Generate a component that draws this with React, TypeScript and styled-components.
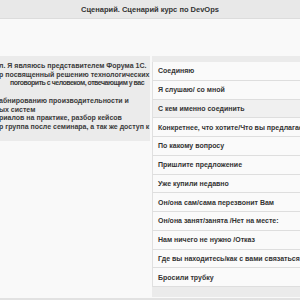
import React from "react";
import styled, { createGlobalStyle } from "styled-components";

const GlobalStyle = createGlobalStyle`
  html, body {
    margin: 0;
    padding: 0;
    width: 300px;
    height: 300px;
    overflow: hidden;
    background: #f9f9f9;
    font-family: "Liberation Sans", Arial, sans-serif;
    color: #333;
  }
`;

const Page = styled.div`
  width: 300px;
  height: 300px;
  overflow: hidden;
  display: flex;
  flex-direction: column;
  border-bottom: 2px solid #e2e2e2;
  box-sizing: border-box;
`;

const Header = styled.div`
  height: 18px;
  flex: none;
  display: flex;
  align-items: center;
  justify-content: center;
  background: #e8e8e8;
  border-bottom: 1px solid #dcdcdc;
  font-size: 7.5px;
  font-weight: bold;
  color: #333;
`;

const Spacer = styled.div`
  height: 37px;
  flex: none;
`;

const Columns = styled.div`
  display: flex;
  align-items: flex-start;
  gap: 2px;
  width: 360px;
`;

const Script = styled.div`
  width: 150px;
  flex: none;
  background: #ebebeb;
  padding: 6px 0 9px 0;
  overflow: hidden;
  font-size: 7px;
  font-weight: bold;
  line-height: 8.7px;
  color: #3a3a3a;
`;

const Line = styled.div<{ $indent?: number; $tight?: boolean }>`
  white-space: nowrap;
  margin-left: ${(p) => p.$indent ?? -1}px;
  letter-spacing: ${(p) => (p.$tight ? "-0.5px" : "normal")};
  min-height: 8.7px;
`;

const Answers = styled.div`
  flex: 1;
  background: #ebebeb;
  padding: 6px 0 10px 0;
`;

const Answer = styled.div<{ $active?: boolean }>`
  height: 18.75px;
  box-sizing: border-box;
  display: flex;
  align-items: center;
  padding-left: 5px;
  background: ${(p) => (p.$active ? "#f0f0f0" : "#fafafa")};
  border-bottom: 1px solid #dedede;
  border-left: 1px solid #e0e0e0;
  font-size: 7px;
  font-weight: bold;
  color: #333;
  white-space: nowrap;
`;

const answers = [
  "Соединяю",
  "Я слушаю/ со мной",
  "С кем именно соединить",
  "Конкретнее, что хотите/Что вы предлагаете",
  "По какому вопросу",
  "Пришлите предложение",
  "Уже купили недавно",
  "Он/она сам/сама перезвонит Вам",
  "Он/она занят/занята /Нет на месте:",
  "Нам ничего не нужно /Отказ",
  "Где вы находитесь/как с вами связаться",
  "Бросили трубку",
];

export default function App() {
  return (
    <>
      <GlobalStyle />
      <Page>
        <Header>Сценарий. Сценарий курс по DevOps</Header>
        <Spacer />
        <Columns>
          <Script>
            <Line>л. Я являюсь представителем Форума 1С.</Line>
            <Line>р посвященный решению технологических</Line>
            <Line $indent={10} $tight>
              поговорить с человеком, отвечающим у вас
            </Line>
            <Line />
            <Line>абнированию производительности и</Line>
            <Line>ых систем</Line>
            <Line>риалов на практике, разбор кейсов</Line>
            <Line>р группа после семинара, а так же доступ к</Line>
          </Script>
          <Answers>
            {answers.map((a, i) => (
              <Answer key={a} $active={i === 2}>
                {a}
              </Answer>
            ))}
          </Answers>
        </Columns>
      </Page>
    </>
  );
}
